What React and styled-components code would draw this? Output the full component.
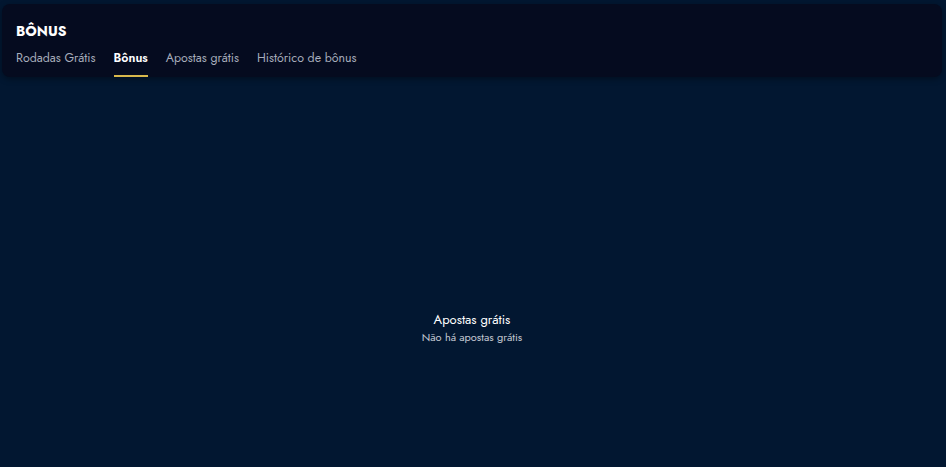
import React, { useState } from "react";
import styled, { createGlobalStyle } from "styled-components";

const GlobalStyle = createGlobalStyle`
  html, body {
    margin: 0;
    padding: 0;
    background: #021731;
    font-family: "Jost", "Noto Sans", "Liberation Sans", sans-serif;
  }
  #root {
    min-height: 467px;
  }
`;

const tabs = ["Rodadas Grátis", "Bônus", "Apostas grátis", "Histórico de bônus"];

const App = () => {
  const [active, setActive] = useState(1);
  return (
    <React.Fragment>
      <GlobalStyle />
      <Page>
        <Header>
          <Title>BÔNUS</Title>
          <TabRow>
            {tabs.map((tab, i) => (
              <Tab key={tab} active={i === active} onClick={() => setActive(i)}>
                {tab}
              </Tab>
            ))}
          </TabRow>
        </Header>
        <Empty>
          <EmptyTitle>Apostas grátis</EmptyTitle>
          <EmptyText>Não há apostas grátis</EmptyText>
        </Empty>
      </Page>
    </React.Fragment>
  );
};

const Page = styled("div")`
  display: flex;
  flex-direction: column;
  height: 467px;
  padding: 4px 4px 0 2px;
  box-sizing: border-box;
`;

const Header = styled("div")`
  background: #050b1f;
  border-radius: 8px;
  box-shadow: 0 2px 6px rgba(0, 0, 0, 0.35);
  padding: 19px 14px 0;
  display: flex;
  flex-direction: column;
  gap: 10px;
`;

const Title = styled("h1")`
  margin: 0;
  color: #ffffff;
  font-size: 14px;
  font-weight: 700;
  line-height: 17px;
`;

const TabRow = styled("div")`
  display: flex;
  gap: 18px;
`;

const Tab = styled("button")`
  border: none;
  background: none;
  padding: 0 0 9px;
  font: inherit;
  font-size: 12.4px;
  line-height: 16px;
  cursor: pointer;
  color: ${props => (props.active ? "#ffffff" : "#a7adbb")};
  font-weight: ${props => (props.active ? 600 : 400)};
  border-bottom: 2px solid ${props => (props.active ? "#d8b84c" : "transparent")};
`;

const Empty = styled("div")`
  flex-grow: 1;
  display: flex;
  flex-direction: column;
  align-items: center;
  justify-content: center;
  padding-top: 111px;
`;

const EmptyTitle = styled("div")`
  color: #ffffff;
  font-size: 13px;
  line-height: 18px;
`;

const EmptyText = styled("div")`
  color: #c3c8d2;
  font-size: 11px;
  line-height: 16px;
`;

export default App;
